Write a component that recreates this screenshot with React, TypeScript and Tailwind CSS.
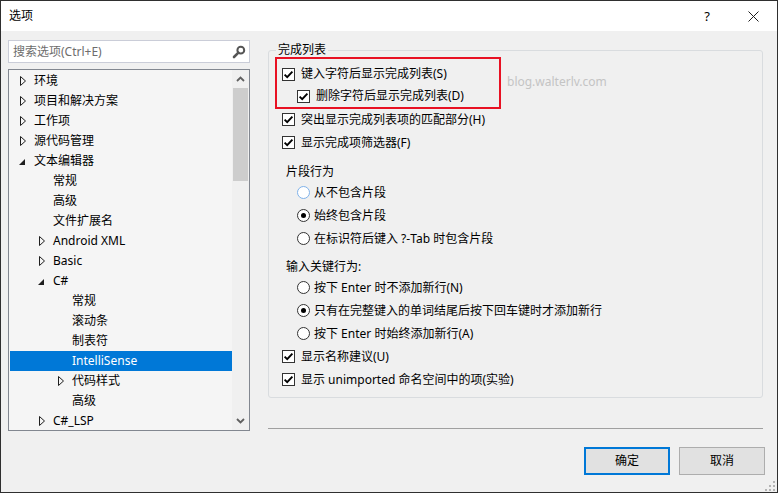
import React from 'react';

type TreeItem = {
  label: string;
  level: 0 | 1 | 2;
  arrow?: 'closed' | 'open';
  selected?: boolean;
};

const treeItems: TreeItem[] = [
  { label: '环境', level: 0, arrow: 'closed' },
  { label: '项目和解决方案', level: 0, arrow: 'closed' },
  { label: '工作项', level: 0, arrow: 'closed' },
  { label: '源代码管理', level: 0, arrow: 'closed' },
  { label: '文本编辑器', level: 0, arrow: 'open' },
  { label: '常规', level: 1 },
  { label: '高级', level: 1 },
  { label: '文件扩展名', level: 1 },
  { label: 'Android XML', level: 1, arrow: 'closed' },
  { label: 'Basic', level: 1, arrow: 'closed' },
  { label: 'C#', level: 1, arrow: 'open' },
  { label: '常规', level: 2 },
  { label: '滚动条', level: 2 },
  { label: '制表符', level: 2 },
  { label: 'IntelliSense', level: 2, selected: true },
  { label: '代码样式', level: 2, arrow: 'closed' },
  { label: '高级', level: 2 },
  { label: 'C#_LSP', level: 1, arrow: 'closed' },
];

const indent: Record<number, string> = {
  0: 'pl-[10px]',
  1: 'pl-[29px]',
  2: 'pl-[48px]',
};

function Arrow({ kind }: { kind?: 'closed' | 'open' }) {
  if (kind === 'closed') {
    return (
      <svg width="7" height="10" viewBox="0 0 7 10" className="block">
        <polygon points="0.5,0.5 5.5,5 0.5,9.5" fill="none" stroke="#1e1e1e" strokeWidth="1" />
      </svg>
    );
  }
  if (kind === 'open') {
    return (
      <svg width="6" height="6" viewBox="0 0 6 6" className="-ml-px mt-[2px] block">
        <polygon points="6,0 6,6 0,6" fill="#1e1e1e" />
      </svg>
    );
  }
  return null;
}

function CheckBox() {
  return (
    <span className="flex h-[13px] w-[13px] shrink-0 items-center justify-center border border-[#333333] bg-white">
      <svg width="11" height="11" viewBox="0 0 11 11" className="block">
        <path d="M1.6 5.6 L4.2 8.2 L9.4 2.6" fill="none" stroke="#000" strokeWidth="1.9" />
      </svg>
    </span>
  );
}

function Radio({ checked, hover }: { checked?: boolean; hover?: boolean }) {
  return (
    <span
      className={
        hover
          ? 'flex h-[13px] w-[13px] shrink-0 items-center justify-center rounded-full border border-[#7fb2ea] bg-white'
          : 'flex h-[13px] w-[13px] shrink-0 items-center justify-center rounded-full border border-[#333333] bg-white'
      }
    >
      {checked && <span className="h-[5px] w-[5px] rounded-full bg-black" />}
    </span>
  );
}

function CheckRow({ label, sub, className }: { label: string; sub?: boolean; className: string }) {
  return (
    <div className={`flex items-center ${sub ? 'pl-[15px]' : ''} ${className}`}>
      <CheckBox />
      <span className="ml-[6px] whitespace-nowrap">{label}</span>
    </div>
  );
}

function RadioRow({ label, checked, hover }: { label: string; checked?: boolean; hover?: boolean }) {
  return (
    <div className="flex h-[23px] items-center pl-[15px]">
      <Radio checked={checked} hover={hover} />
      <span className="ml-[4px] whitespace-nowrap">{label}</span>
    </div>
  );
}

function Chevron({ down }: { down?: boolean }) {
  return (
    <svg width="9" height="6" viewBox="0 0 9 6" className="block">
      <path
        d={down ? 'M1 1 L4.5 4.5 L8 1' : 'M1 5 L4.5 1.5 L8 5'}
        fill="none"
        stroke="#606060"
        strokeWidth="1.8"
      />
    </svg>
  );
}

export default function App() {
  return (
    <div className="relative flex h-[493px] w-[778px] flex-col border border-[#2f2f2f] bg-[#f0f0f0] font-['Noto_Sans','Noto_Sans_CJK_SC',sans-serif] text-[12px] text-black">
      {/* Title bar */}
      <div className="flex h-[30px] shrink-0 items-center bg-white">
        <span className="ml-[8px] leading-[16px]">选项</span>
        <div className="ml-auto flex items-center">
          <span className="mr-[38px] text-[13px] leading-[16px]">?</span>
          <svg width="11" height="11" viewBox="0 0 11 11" className="mr-[18px] block">
            <path d="M0.5 0.5 L10.5 10.5 M10.5 0.5 L0.5 10.5" stroke="#1e1e1e" strokeWidth="1" />
          </svg>
        </div>
      </div>

      <div className="flex">
        {/* Left column */}
        <div className="ml-[7px] mt-[9px] flex w-[242px] flex-col">
          <div className="flex h-[23px] items-center border border-[#cacdd8] bg-white pl-[4px] pr-[3px]">
            <span className="leading-[16px] text-[#6d6d6d]">搜索选项(Ctrl+E)</span>
            <svg width="14" height="14" viewBox="0 0 14 14" className="ml-auto block">
              <circle cx="8.8" cy="5.2" r="3.4" fill="none" stroke="#555" strokeWidth="2" />
              <path d="M6.4 7.6 L2 12" stroke="#555" strokeWidth="2.6" strokeLinecap="round" />
            </svg>
          </div>

          <div className="mt-[6px] flex h-[362px] border border-[#828790] bg-[#f5f5f5]">
            <div className="w-[223px] overflow-hidden pl-px pt-px">
              {treeItems.map((item, i) => (
                <div
                  key={i}
                  className={`flex h-[20px] items-center ${indent[item.level]} ${
                    item.selected ? 'bg-[#0078d7] text-white' : ''
                  }`}
                >
                  <span className="flex w-[14px] shrink-0 items-center">
                    <Arrow kind={item.arrow} />
                  </span>
                  <span className="whitespace-nowrap leading-[16px]">{item.label}</span>
                </div>
              ))}
            </div>
            <div className="flex w-[17px] flex-col bg-[#f0f0f0]">
              <div className="flex h-[18px] items-center justify-center">
                <Chevron />
              </div>
              <div className="mx-px h-[93px] bg-[#cdcdcd]" />
              <div className="mt-auto flex h-[18px] items-center justify-center">
                <Chevron down />
              </div>
            </div>
          </div>
        </div>

        {/* Right column */}
        <div className="ml-[18px] mt-[11px] flex w-[495px] flex-col">
          <fieldset className="rounded-[3px] border border-[#d9dcdf] pb-[6px]">
            <legend className="ml-[7px] px-[2px] leading-[16px]">完成列表</legend>
            <div className="pl-[13px] pt-[5px]">
              <div className="relative">
                <CheckRow label="键入字符后显示完成列表(S)" className="h-[22px]" />
                <CheckRow label="删除字符后显示完成列表(D)" sub className="h-[22px]" />
                <div className="absolute left-[-7px] top-[-6px] h-[52px] w-[226px] border-2 border-[#e81123]" />
                <span className="absolute left-[225px] top-[11px] whitespace-nowrap leading-[16px] text-[#c4c4c4]">
                  blog.walterlv.com
                </span>
              </div>
              <CheckRow label="突出显示完成列表项的匹配部分(H)" className="mt-px h-[23px]" />
              <CheckRow label="显示完成项筛选器(F)" className="h-[23px]" />

              <div className="ml-[4px] mt-[9px] flex h-[18px] items-center">片段行为</div>
              <RadioRow label="从不包含片段" hover />
              <RadioRow label="始终包含片段" checked />
              <RadioRow label="在标识符后键入 ?-Tab 时包含片段" />

              <div className="ml-[4px] mt-[8px] flex h-[18px] items-center">输入关键行为:</div>
              <RadioRow label="按下 Enter 时不添加新行(N)" />
              <RadioRow label="只有在完整键入的单词结尾后按下回车键时才添加新行" checked />
              <RadioRow label="按下 Enter 时始终添加新行(A)" />

              <CheckRow label="显示名称建议(U)" className="h-[23px]" />
              <CheckRow label="显示 unimported 命名空间中的项(实验)" className="h-[23px]" />
            </div>
          </fieldset>
          <div className="mt-[30px] h-px bg-[#a0a0a0]" />
        </div>
      </div>

      {/* Buttons */}
      <div className="mr-[12px] mt-[16px] flex justify-end gap-[9px]">
        <button
          type="button"
          className="flex h-[28px] w-[86px] items-center justify-center border-2 border-[#0078d7] bg-[#e1e1e1] leading-[16px]"
        >
          确定
        </button>
        <button
          type="button"
          className="flex h-[28px] w-[86px] items-center justify-center border border-[#adadad] bg-[#e1e1e1] leading-[16px]"
        >
          取消
        </button>
      </div>

      {/* Resize grip */}
      <svg width="10" height="10" viewBox="0 0 10 10" className="absolute bottom-[1px] right-[2px] block">
        <rect x="8" y="0" width="2" height="2" fill="#b4b4b4" />
        <rect x="4" y="4" width="2" height="2" fill="#b4b4b4" />
        <rect x="8" y="4" width="2" height="2" fill="#b4b4b4" />
        <rect x="0" y="8" width="2" height="2" fill="#b4b4b4" />
        <rect x="4" y="8" width="2" height="2" fill="#b4b4b4" />
        <rect x="8" y="8" width="2" height="2" fill="#b4b4b4" />
      </svg>
    </div>
  );
}
